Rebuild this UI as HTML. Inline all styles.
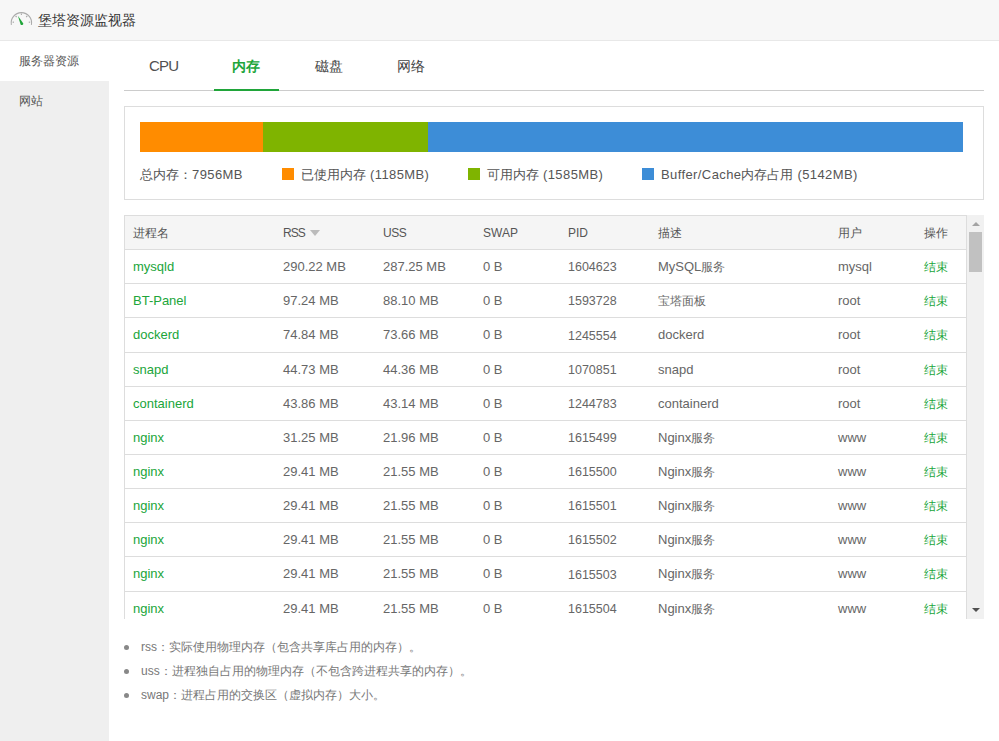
<!DOCTYPE html>
<html><head><meta charset="utf-8">
<style>
*{box-sizing:border-box;margin:0;padding:0}
html,body{width:999px;height:741px;overflow:hidden;background:#fff;font-family:"Liberation Sans",sans-serif;color:#666;font-size:13px}
.hdr{position:absolute;left:0;top:0;width:999px;height:41px;background:#f7f7f7;border-bottom:1px solid #e8e8e8}
.hdr .ttl{position:absolute;left:38px;top:10.5px;font-size:14px;color:#333;line-height:18px}
.hdr svg{position:absolute;left:10px;top:12px}
.side{position:absolute;left:0;top:41px;width:109px;height:700px;background:#efefef}
.side .it{height:40px;line-height:40px;padding-left:19px;font-size:12px;color:#555}
.side .it.on{background:#fff}
.tabs{position:absolute;left:124px;top:41px;width:860px;height:50px;border-bottom:1px solid #ccc}
.tab{position:absolute;top:15px;font-size:14px;line-height:20px;color:#444}
.tab.on{color:#20a53a;font-weight:bold}
.uline{position:absolute;left:90px;top:48px;width:65px;height:2px;background:#20a53a}
.box{position:absolute;left:124px;top:106px;width:860px;height:94px;border:1px solid #ddd}
.bar{position:absolute;left:15px;top:15px;width:823px;height:30px;display:flex}
.bar div{height:30px}
.leg{position:absolute;top:60px;line-height:16px;font-size:13px;color:#555;white-space:nowrap}
.sq{position:absolute;top:61px;width:12px;height:12px}
.l{letter-spacing:.4px}
.tbl{position:absolute;left:124px;top:215px;width:860px;height:404px;overflow:hidden}
.hd{position:absolute;left:0;width:843px;background:#f5f5f5;border:1px solid #ddd;border-top-color:#ddd}
.rw{position:absolute;left:0;width:843px;border-left:1px solid #ddd;border-right:1px solid #ddd;border-bottom:1px solid #ddd;background:#fff}
.c{position:absolute;top:0;white-space:nowrap;font-size:13px;color:#666}
.hd .c{color:#555;top:1px;font-size:12px}
.c i{font-style:normal;font-size:12px}
.c.n{font-size:12.5px;top:0.5px}
.g{color:#20a53a}
.tri{display:inline-block;width:0;height:0;border-left:5.5px solid transparent;border-right:5.5px solid transparent;border-top:6px solid #bbb;margin-left:5px;vertical-align:1px}
.sb{position:absolute;left:843px;top:0;width:17px;height:404px;background:#f1f1f1}
.thumb{position:absolute;left:2px;top:17px;width:13px;height:40px;background:#c1c1c1}
.up{position:absolute;left:4.5px;top:6.5px;width:0;height:0;border-left:4px solid transparent;border-right:4px solid transparent;border-bottom:4.5px solid #a3a3a3}
.dn{position:absolute;left:4.5px;top:392.5px;width:0;height:0;border-left:4px solid transparent;border-right:4px solid transparent;border-top:4.5px solid #505050}
.notes{position:absolute;left:124px;top:636px}
.notes li{list-style:none;position:relative;padding-left:17px;height:24px;line-height:22px;font-size:12px;color:#777}
.notes li:before{content:"";position:absolute;left:0;top:9px;width:5px;height:5px;border-radius:50%;background:#888}
</style></head><body>
<div class="hdr">
<svg width="40" height="40" viewBox="0 0 40 40" style="left:0;top:0"><path d="M11.4 24.8 A10.2 10.2 0 1 1 31.4 24.8" fill="none" stroke="#aaa" stroke-width="1.1"/><path d="M12.6 22.3 L14 22.1 M15.6 16 L16.6 17 M21.4 13.6 L21.4 15 M27.2 16 L26.2 17 M30.2 22.3 L28.8 22.1" stroke="#a8a8a8" stroke-width="1.1"/><path d="M17.9 15.8 L23.3 23.4 A1.55 1.55 0 0 1 20.6 24.5 Z" fill="#20a53a"/></svg>
<div class="ttl">堡塔资源监视器</div>
</div>
<div class="side">
<div class="it on">服务器资源</div>
<div class="it">网站</div>
</div>
<div class="tabs">
<div class="tab" style="left:25px;font-size:15px;letter-spacing:-0.8px;top:14.5px;color:#505050">CPU</div>
<div class="tab on" style="left:108px">内存</div>
<div class="tab" style="left:191px">磁盘</div>
<div class="tab" style="left:273px">网络</div>
<div class="uline"></div>
</div>
<div class="box">
<div class="bar"><div style="width:123px;background:#ff8c00"></div><div style="width:165px;background:#7fb400"></div><div style="flex:1;background:#3d8dd7"></div></div>
<div class="leg" style="left:15px">总内存：<span class="l">7956MB</span></div>
<div class="sq" style="left:157px;background:#ff8c00"></div>
<div class="leg" style="left:176px">已使用内存<span class="l"> (1185MB)</span></div>
<div class="sq" style="left:343px;background:#7fb400"></div>
<div class="leg" style="left:362px">可用内存<span class="l"> (1585MB)</span></div>
<div class="sq" style="left:517px;background:#3d8dd7"></div>
<div class="leg" style="left:536px"><span class="l">Buffer/Cache</span>内存占用<span class="l"> (5142MB)</span></div>
</div>
<div class="tbl">
<div class="hd" style="top:0;height:35px;line-height:33px">
<span class="c" style="left:8px"><i>进程名</i></span>
<span class="c" style="left:158px"><span style="letter-spacing:-1px">RSS</span><b class="tri"></b></span>
<span class="c" style="left:258px"><span style="letter-spacing:-0.5px">USS</span></span>
<span class="c" style="left:358px">SWAP</span>
<span class="c" style="left:443px">PID</span>
<span class="c" style="left:533px"><i>描述</i></span>
<span class="c" style="left:713px"><i>用户</i></span>
<span class="c" style="left:799px"><i>操作</i></span>
</div>
<div class="rw" style="top:35px;height:34px;line-height:33px">
<span class="c g" style="left:8px">mysqld</span>
<span class="c" style="left:158px">290.22 MB</span>
<span class="c" style="left:258px">287.25 MB</span>
<span class="c" style="left:358px">0 B</span>
<span class="c n" style="left:443px">1604623</span>
<span class="c" style="left:533px">MySQL<i>服务</i></span>
<span class="c" style="left:713px">mysql</span>
<span class="c g" style="left:799px"><i>结束</i></span>
</div>
<div class="rw" style="top:69px;height:34px;line-height:33px">
<span class="c g" style="left:8px">BT-Panel</span>
<span class="c" style="left:158px">97.24 MB</span>
<span class="c" style="left:258px">88.10 MB</span>
<span class="c" style="left:358px">0 B</span>
<span class="c n" style="left:443px">1593728</span>
<span class="c" style="left:533px"><i>宝塔面板</i></span>
<span class="c" style="left:713px">root</span>
<span class="c g" style="left:799px"><i>结束</i></span>
</div>
<div class="rw" style="top:103px;height:35px;line-height:34px">
<span class="c g" style="left:8px">dockerd</span>
<span class="c" style="left:158px">74.84 MB</span>
<span class="c" style="left:258px">73.66 MB</span>
<span class="c" style="left:358px">0 B</span>
<span class="c n" style="left:443px">1245554</span>
<span class="c" style="left:533px">dockerd</span>
<span class="c" style="left:713px">root</span>
<span class="c g" style="left:799px"><i>结束</i></span>
</div>
<div class="rw" style="top:138px;height:34px;line-height:33px">
<span class="c g" style="left:8px">snapd</span>
<span class="c" style="left:158px">44.73 MB</span>
<span class="c" style="left:258px">44.36 MB</span>
<span class="c" style="left:358px">0 B</span>
<span class="c n" style="left:443px">1070851</span>
<span class="c" style="left:533px">snapd</span>
<span class="c" style="left:713px">root</span>
<span class="c g" style="left:799px"><i>结束</i></span>
</div>
<div class="rw" style="top:172px;height:34px;line-height:33px">
<span class="c g" style="left:8px">containerd</span>
<span class="c" style="left:158px">43.86 MB</span>
<span class="c" style="left:258px">43.14 MB</span>
<span class="c" style="left:358px">0 B</span>
<span class="c n" style="left:443px">1244783</span>
<span class="c" style="left:533px">containerd</span>
<span class="c" style="left:713px">root</span>
<span class="c g" style="left:799px"><i>结束</i></span>
</div>
<div class="rw" style="top:206px;height:34px;line-height:33px">
<span class="c g" style="left:8px">nginx</span>
<span class="c" style="left:158px">31.25 MB</span>
<span class="c" style="left:258px">21.96 MB</span>
<span class="c" style="left:358px">0 B</span>
<span class="c n" style="left:443px">1615499</span>
<span class="c" style="left:533px">Nginx<i>服务</i></span>
<span class="c" style="left:713px">www</span>
<span class="c g" style="left:799px"><i>结束</i></span>
</div>
<div class="rw" style="top:240px;height:34px;line-height:33px">
<span class="c g" style="left:8px">nginx</span>
<span class="c" style="left:158px">29.41 MB</span>
<span class="c" style="left:258px">21.55 MB</span>
<span class="c" style="left:358px">0 B</span>
<span class="c n" style="left:443px">1615500</span>
<span class="c" style="left:533px">Nginx<i>服务</i></span>
<span class="c" style="left:713px">www</span>
<span class="c g" style="left:799px"><i>结束</i></span>
</div>
<div class="rw" style="top:274px;height:34px;line-height:33px">
<span class="c g" style="left:8px">nginx</span>
<span class="c" style="left:158px">29.41 MB</span>
<span class="c" style="left:258px">21.55 MB</span>
<span class="c" style="left:358px">0 B</span>
<span class="c n" style="left:443px">1615501</span>
<span class="c" style="left:533px">Nginx<i>服务</i></span>
<span class="c" style="left:713px">www</span>
<span class="c g" style="left:799px"><i>结束</i></span>
</div>
<div class="rw" style="top:308px;height:34px;line-height:33px">
<span class="c g" style="left:8px">nginx</span>
<span class="c" style="left:158px">29.41 MB</span>
<span class="c" style="left:258px">21.55 MB</span>
<span class="c" style="left:358px">0 B</span>
<span class="c n" style="left:443px">1615502</span>
<span class="c" style="left:533px">Nginx<i>服务</i></span>
<span class="c" style="left:713px">www</span>
<span class="c g" style="left:799px"><i>结束</i></span>
</div>
<div class="rw" style="top:342px;height:35px;line-height:34px">
<span class="c g" style="left:8px">nginx</span>
<span class="c" style="left:158px">29.41 MB</span>
<span class="c" style="left:258px">21.55 MB</span>
<span class="c" style="left:358px">0 B</span>
<span class="c n" style="left:443px">1615503</span>
<span class="c" style="left:533px">Nginx<i>服务</i></span>
<span class="c" style="left:713px">www</span>
<span class="c g" style="left:799px"><i>结束</i></span>
</div>
<div class="rw" style="top:377px;height:34px;line-height:33px">
<span class="c g" style="left:8px">nginx</span>
<span class="c" style="left:158px">29.41 MB</span>
<span class="c" style="left:258px">21.55 MB</span>
<span class="c" style="left:358px">0 B</span>
<span class="c n" style="left:443px">1615504</span>
<span class="c" style="left:533px">Nginx<i>服务</i></span>
<span class="c" style="left:713px">www</span>
<span class="c g" style="left:799px"><i>结束</i></span>
</div>
<div class="rw" style="top:411px;height:34px;line-height:33px">
<span class="c g" style="left:8px">nginx</span>
<span class="c" style="left:158px">29.41 MB</span>
<span class="c" style="left:258px">21.55 MB</span>
<span class="c" style="left:358px">0 B</span>
<span class="c n" style="left:443px">1615505</span>
<span class="c" style="left:533px">Nginx<i>服务</i></span>
<span class="c" style="left:713px">www</span>
<span class="c g" style="left:799px"><i>结束</i></span>
</div>
<div class="sb"><b class="up"></b><div class="thumb"></div><b class="dn"></b></div>
</div>
<ul class="notes">
<li>rss：实际使用物理内存（包含共享库占用的内存）。</li>
<li>uss：进程独自占用的物理内存（不包含跨进程共享的内存）。</li>
<li>swap：进程占用的交换区（虚拟内存）大小。</li>
</ul>
</body></html>
